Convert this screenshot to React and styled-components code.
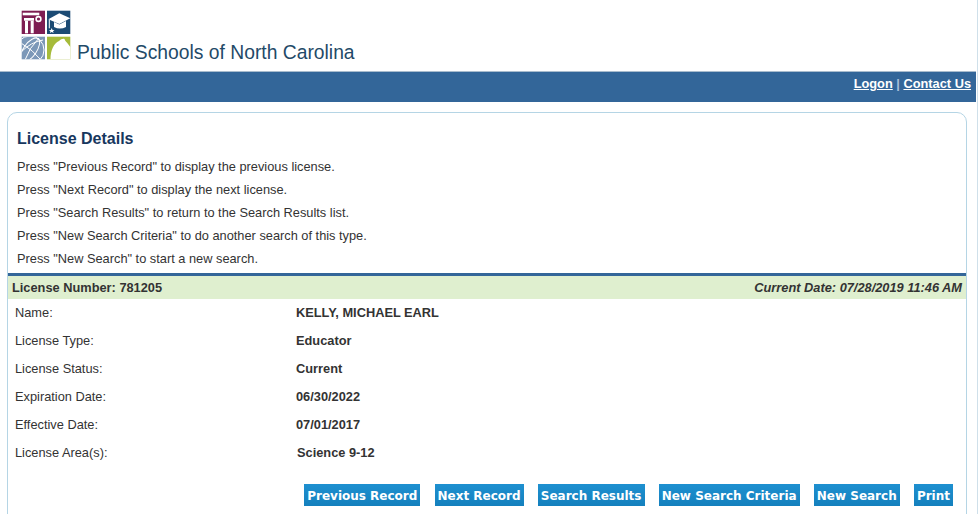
import React from 'react';
import styled, { createGlobalStyle } from 'styled-components';

const GlobalStyle = createGlobalStyle`
  html, body {
    margin: 0;
    padding: 0;
    height: 514px;
    overflow: hidden;
    background: #fff;
    font-family: "Liberation Sans", Arial, sans-serif;
  }
`;

const Page = styled.div`
  width: 978px;
  height: 514px;
  overflow: hidden;
  box-sizing: border-box;
  border-right: 1px solid #cfe0ea;
  padding-right: 2px;
`;

const Header = styled.header`
  height: 71px;
  box-sizing: border-box;
  padding: 10px 0 0 21px;
  display: flex;
  align-items: flex-end;
  gap: 6px;
`;

const LogoMark = styled.svg`
  display: block;
  width: 50px;
  height: 50px;
  margin-bottom: 11px;
  flex: none;
`;

const SiteName = styled.div`
  font-size: 19.3px;
  color: #1f4a68;
  line-height: 24px;
  margin-bottom: 6px;
`;

const NavBar = styled.nav`
  height: 31px;
  box-sizing: border-box;
  background: #336699;
  border-top: 1px solid #a9bccd;
  padding: 3px 5px 0 0;
  text-align: right;
  font-size: 12.8px;
  line-height: 18px;
  font-weight: bold;
  color: #a8c0d8;
  margin-right: -1px;
`;

const NavLink = styled.a`
  color: #fff;
  text-decoration: underline;
`;

const Card = styled.main`
  margin: 10px 0 0 7px;
  width: 960px;
  box-sizing: border-box;
  height: 500px;
  border: 1px solid #b5d5e5;
  border-radius: 10px;
`;

const Title = styled.h1`
  margin: 0;
  padding: 16px 0 0 9px;
  font-size: 16px;
  line-height: 20px;
  font-weight: bold;
  color: #17375e;
`;

const Instructions = styled.div`
  padding: 6px 0 0 9px;
`;

const Instruction = styled.p`
  margin: 0;
  font-size: 12.8px;
  line-height: 23px;
  color: #333;
`;

const RecordBar = styled.div`
  margin-top: 3px;
  height: 26px;
  box-sizing: border-box;
  border-top: 3px solid #336699;
  padding: 0 4px 1px;
  background: #dfefcf;
  display: flex;
  justify-content: space-between;
  align-items: center;
  font-size: 12.8px;
  font-weight: bold;
  color: #333;
`;

const CurrentDate = styled.span`
  font-style: italic;
`;

const Row = styled.div`
  display: grid;
  grid-template-columns: 281px 1fr;
  height: 28px;
  box-sizing: border-box;
  padding: 0 0 2px 7px;
  align-items: center;
  font-size: 12.8px;
  color: #333;
`;

const Value = styled.span`
  font-weight: bold;
  padding-left: ${({ $shift }) => $shift || 0}px;
`;

const Actions = styled.div`
  display: flex;
  justify-content: flex-end;
  gap: 14.2px;
  padding: 17px 13px 0 0;
`;

const ActionButton = styled.button`
  border: 0;
  margin: 0;
  height: 22px;
  padding: 2px 3px 0;
  background: linear-gradient(#1e90d0, #1480bd);
  color: #fff;
  font-family: "DejaVu Sans", Verdana, sans-serif;
  font-size: 12px;
  font-weight: bold;
  line-height: 20px;
  white-space: nowrap;
`;

const instructions = [
  'Press "Previous Record" to display the previous license.',
  'Press "Next Record" to display the next license.',
  'Press "Search Results" to return to the Search Results list.',
  'Press "New Search Criteria" to do another search of this type.',
  'Press "New Search" to start a new search.',
];

const details = [
  ['Name:', 'KELLY, MICHAEL EARL'],
  ['License Type:', 'Educator'],
  ['License Status:', 'Current'],
  ['Expiration Date:', '06/30/2022'],
  ['Effective Date:', '07/01/2017'],
  ['License Area(s):', 'Science 9-12', 1],
];

const actions = ['Previous Record', 'Next Record', 'Search Results', 'New Search Criteria', 'New Search', 'Print'];

const Logo = () => (
  <LogoMark viewBox="0 0 50 50">
    <clipPath id="globeClip">
      <rect x="0.7" y="26.7" width="23.3" height="22.6" />
    </clipPath>
    {/* column */}
    <rect x="0.7" y="0.7" width="23.3" height="23.3" fill="#7e1d52" />
    <rect x="1.7" y="2.7" width="16.6" height="2.6" fill="#fff" />
    <rect x="3" y="8" width="10" height="2.7" fill="#fff" />
    <rect x="4" y="10.7" width="3" height="12.6" fill="#fff" />
    <rect x="9.7" y="10.7" width="3" height="12.6" fill="#fff" />
    <circle cx="17.5" cy="9" r="2.4" fill="none" stroke="#fff" strokeWidth="1.6" />
    {/* cap */}
    <rect x="26" y="0.7" width="23.3" height="23.3" fill="#1b4a73" />
    <path d="M27.3 9.3 L38.3 3.3 L49.3 8.3 L38.3 14 Z" fill="#fff" />
    <path d="M33 12 L33 17 Q39 20 45 17 L45 11 L38.3 14.5 Z" fill="#fff" />
    <path d="M28.3 10 L28.3 18.3" stroke="#fff" strokeWidth="1" />
    <path d="M30.7 18 L31.5 20 L33.5 20 L32 21.2 L32.6 23 L30.7 22 L28.8 23 L29.4 21.2 L27.9 20 L29.9 20 Z" fill="#fff" />
    {/* globe */}
    <rect x="0.7" y="26.7" width="23.3" height="22.6" fill="#7c98b8" />
    <g clipPath="url(#globeClip)">
      <circle cx="9" cy="40" r="14" fill="none" stroke="#fff" strokeWidth="1" />
      <ellipse cx="9" cy="40" rx="6.5" ry="14" fill="none" stroke="#fff" strokeWidth="1" transform="rotate(35 9 40)" />
      <path d="M0 33 Q12 40 20 50 M0 42 Q10 32 22 30 M4 50 Q8 38 18 28" fill="none" stroke="#fff" strokeWidth="1" />
    </g>
    {/* state */}
    <rect x="26" y="26.7" width="23.3" height="22.6" fill="#a6bb3a" />
    <path d="M29.5 49.3 C29.5 40 33 33 38 31 C40 29 42 28.5 43.5 29 C44 31 46 32.5 47 34 L49.3 37 L49.3 49.3 Z" fill="#fff" />
  </LogoMark>
);

export default function App() {
  return (
    <>
      <GlobalStyle />
      <Page>
        <Header>
          <Logo />
          <SiteName>Public Schools of North Carolina</SiteName>
        </Header>
        <NavBar>
          <NavLink href="#">Logon</NavLink> | <NavLink href="#">Contact Us</NavLink>
        </NavBar>
        <Card>
          <Title>License Details</Title>
          <Instructions>
            {instructions.map(line => (
              <Instruction key={line}>{line}</Instruction>
            ))}
          </Instructions>
          <RecordBar>
            <span>License Number: 781205</span>
            <CurrentDate>Current Date: 07/28/2019 11:46 AM</CurrentDate>
          </RecordBar>
          {details.map(([label, value, shift]) => (
            <Row key={label}>
              <span>{label}</span>
              <Value $shift={shift}>{value}</Value>
            </Row>
          ))}
          <Actions>
            {actions.map(label => (
              <ActionButton key={label}>{label}</ActionButton>
            ))}
          </Actions>
        </Card>
      </Page>
    </>
  );
}
